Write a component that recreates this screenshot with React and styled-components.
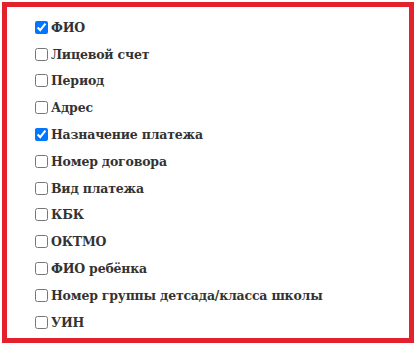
import React, { useState } from 'react';
import styled, { createGlobalStyle } from 'styled-components';

const GlobalStyle = createGlobalStyle`
	html, body {
		margin: 0;
		padding: 0;
		background: #ffffff;
	}
	body {
		font-family: "DejaVu Serif", "Liberation Serif", serif;
	}
`;

const fields = [
	{ id: 'fio', label: 'ФИО', checked: true },
	{ id: 'account', label: 'Лицевой счет' },
	{ id: 'period', label: 'Период' },
	{ id: 'address', label: 'Адрес' },
	{ id: 'purpose', label: 'Назначение платежа', checked: true },
	{ id: 'contract', label: 'Номер договора' },
	{ id: 'kind', label: 'Вид платежа' },
	{ id: 'kbk', label: 'КБК' },
	{ id: 'oktmo', label: 'ОКТМО' },
	{ id: 'child', label: 'ФИО ребёнка' },
	{ id: 'group', label: 'Номер группы детсада/класса школы' },
	{ id: 'uin', label: 'УИН' },
];

const App = () => {
	const [checked, setChecked] = useState(
		fields.reduce((acc, f) => ({ ...acc, [f.id]: !!f.checked }), {})
	);

	const onToggle = id => {
		setChecked({ ...checked, [id]: !checked[id] });
	};

	return (
		<React.Fragment>
			<GlobalStyle />
			<Frame>
				<List>
					{fields.map(f => (
						<Row key={f.id}>
							<Check
								type="checkbox"
								checked={checked[f.id]}
								onChange={() => onToggle(f.id)}
							/>
							<Label>{f.label}</Label>
						</Row>
					))}
				</List>
			</Frame>
		</React.Fragment>
	);
};
export default App;

const Frame = styled.div`
	margin: 2px 6px 0 2px;
	height: 331px;
	border: 5px solid #e4222e;
	background: #ffffff;
`;

const List = styled.div`
	display: flex;
	flex-direction: column;
	padding: 7px 0 0 28px;
`;

const Row = styled.label`
	display: flex;
	align-items: center;
	gap: 3px;
	height: 26.8px;
	cursor: pointer;
`;

const Check = styled.input`
	width: 13px;
	height: 13px;
	margin: 0;
	accent-color: #0075ff;
`;

const Label = styled.span`
	font-size: 12.5px;
	font-weight: 700;
	color: #333333;
	letter-spacing: -0.2px;
`;
